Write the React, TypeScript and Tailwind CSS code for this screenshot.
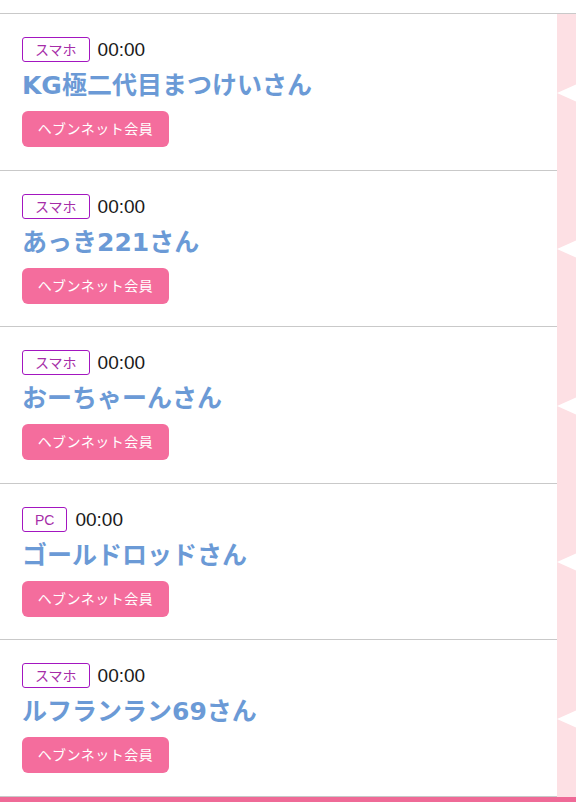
import React from "react";

type Item = { device: string; time: string; name: string };

const items: Item[] = [
  { device: "スマホ", time: "00:00", name: "KG極二代目まつけいさん" },
  { device: "スマホ", time: "00:00", name: "あっき221さん" },
  { device: "スマホ", time: "00:00", name: "おーちゃーんさん" },
  { device: "PC", time: "00:00", name: "ゴールドロッドさん" },
  { device: "スマホ", time: "00:00", name: "ルフランラン69さん" },
];

const font = {
  fontFamily: '"Liberation Sans", "Noto Sans CJK JP", sans-serif',
};

const nameFont = {
  fontFamily: '"DejaVu Sans", "Noto Sans CJK JP", sans-serif',
};

function Row({ item, odd }: { item: Item; odd: boolean }) {
  return (
    <div className="flex">
      <div
        className={
          odd
            ? "flex-1 border-b border-[#c9c9c9] bg-white pl-[22px] pt-[23px] pb-[23px]"
            : "flex-1 border-b border-[#c9c9c9] bg-white pl-[22px] pt-[23px] pb-[22px]"
        }
      >
        <div className="flex h-[25px] items-center gap-2">
          <span className="box-border flex h-[25px] items-center rounded-[3px] border border-[#a316c0] px-3 text-[14px] leading-none text-[#a62da8]">
            {item.device}
          </span>
          <span className="text-[19px] leading-none text-[#1a1a1a]">{item.time}</span>
        </div>
        <div
          className="mt-[9px] h-[30px] text-[25px] font-semibold leading-[30px] text-[#6b9ad6]"
          style={nameFont}
        >
          {item.name}
        </div>
        <div className="mt-[10px] flex h-[36px] w-[147px] items-center justify-center rounded-[6px] bg-[#f46d9d] text-[14px] tracking-[0.5px] text-white">
          ヘブンネット会員
        </div>
      </div>
      <div className="flex w-[19px] items-center overflow-hidden bg-[#fde0e4]">
        <svg width="19" height="18" viewBox="0 0 19 18" className="block">
          <polygon points="0,9 20,0 20,18" fill="#ffffff" />
        </svg>
      </div>
    </div>
  );
}

export default function App() {
  return (
    <div className="w-[576px] bg-white" style={font}>
      <div className="box-content h-[13px] border-b border-[#c9c9c9] bg-white" />
      {items.map((it, i) => (
        <Row key={i} item={it} odd={i % 2 === 0} />
      ))}
      <div className="h-[6px] bg-[#ef6a97]" />
    </div>
  );
}
